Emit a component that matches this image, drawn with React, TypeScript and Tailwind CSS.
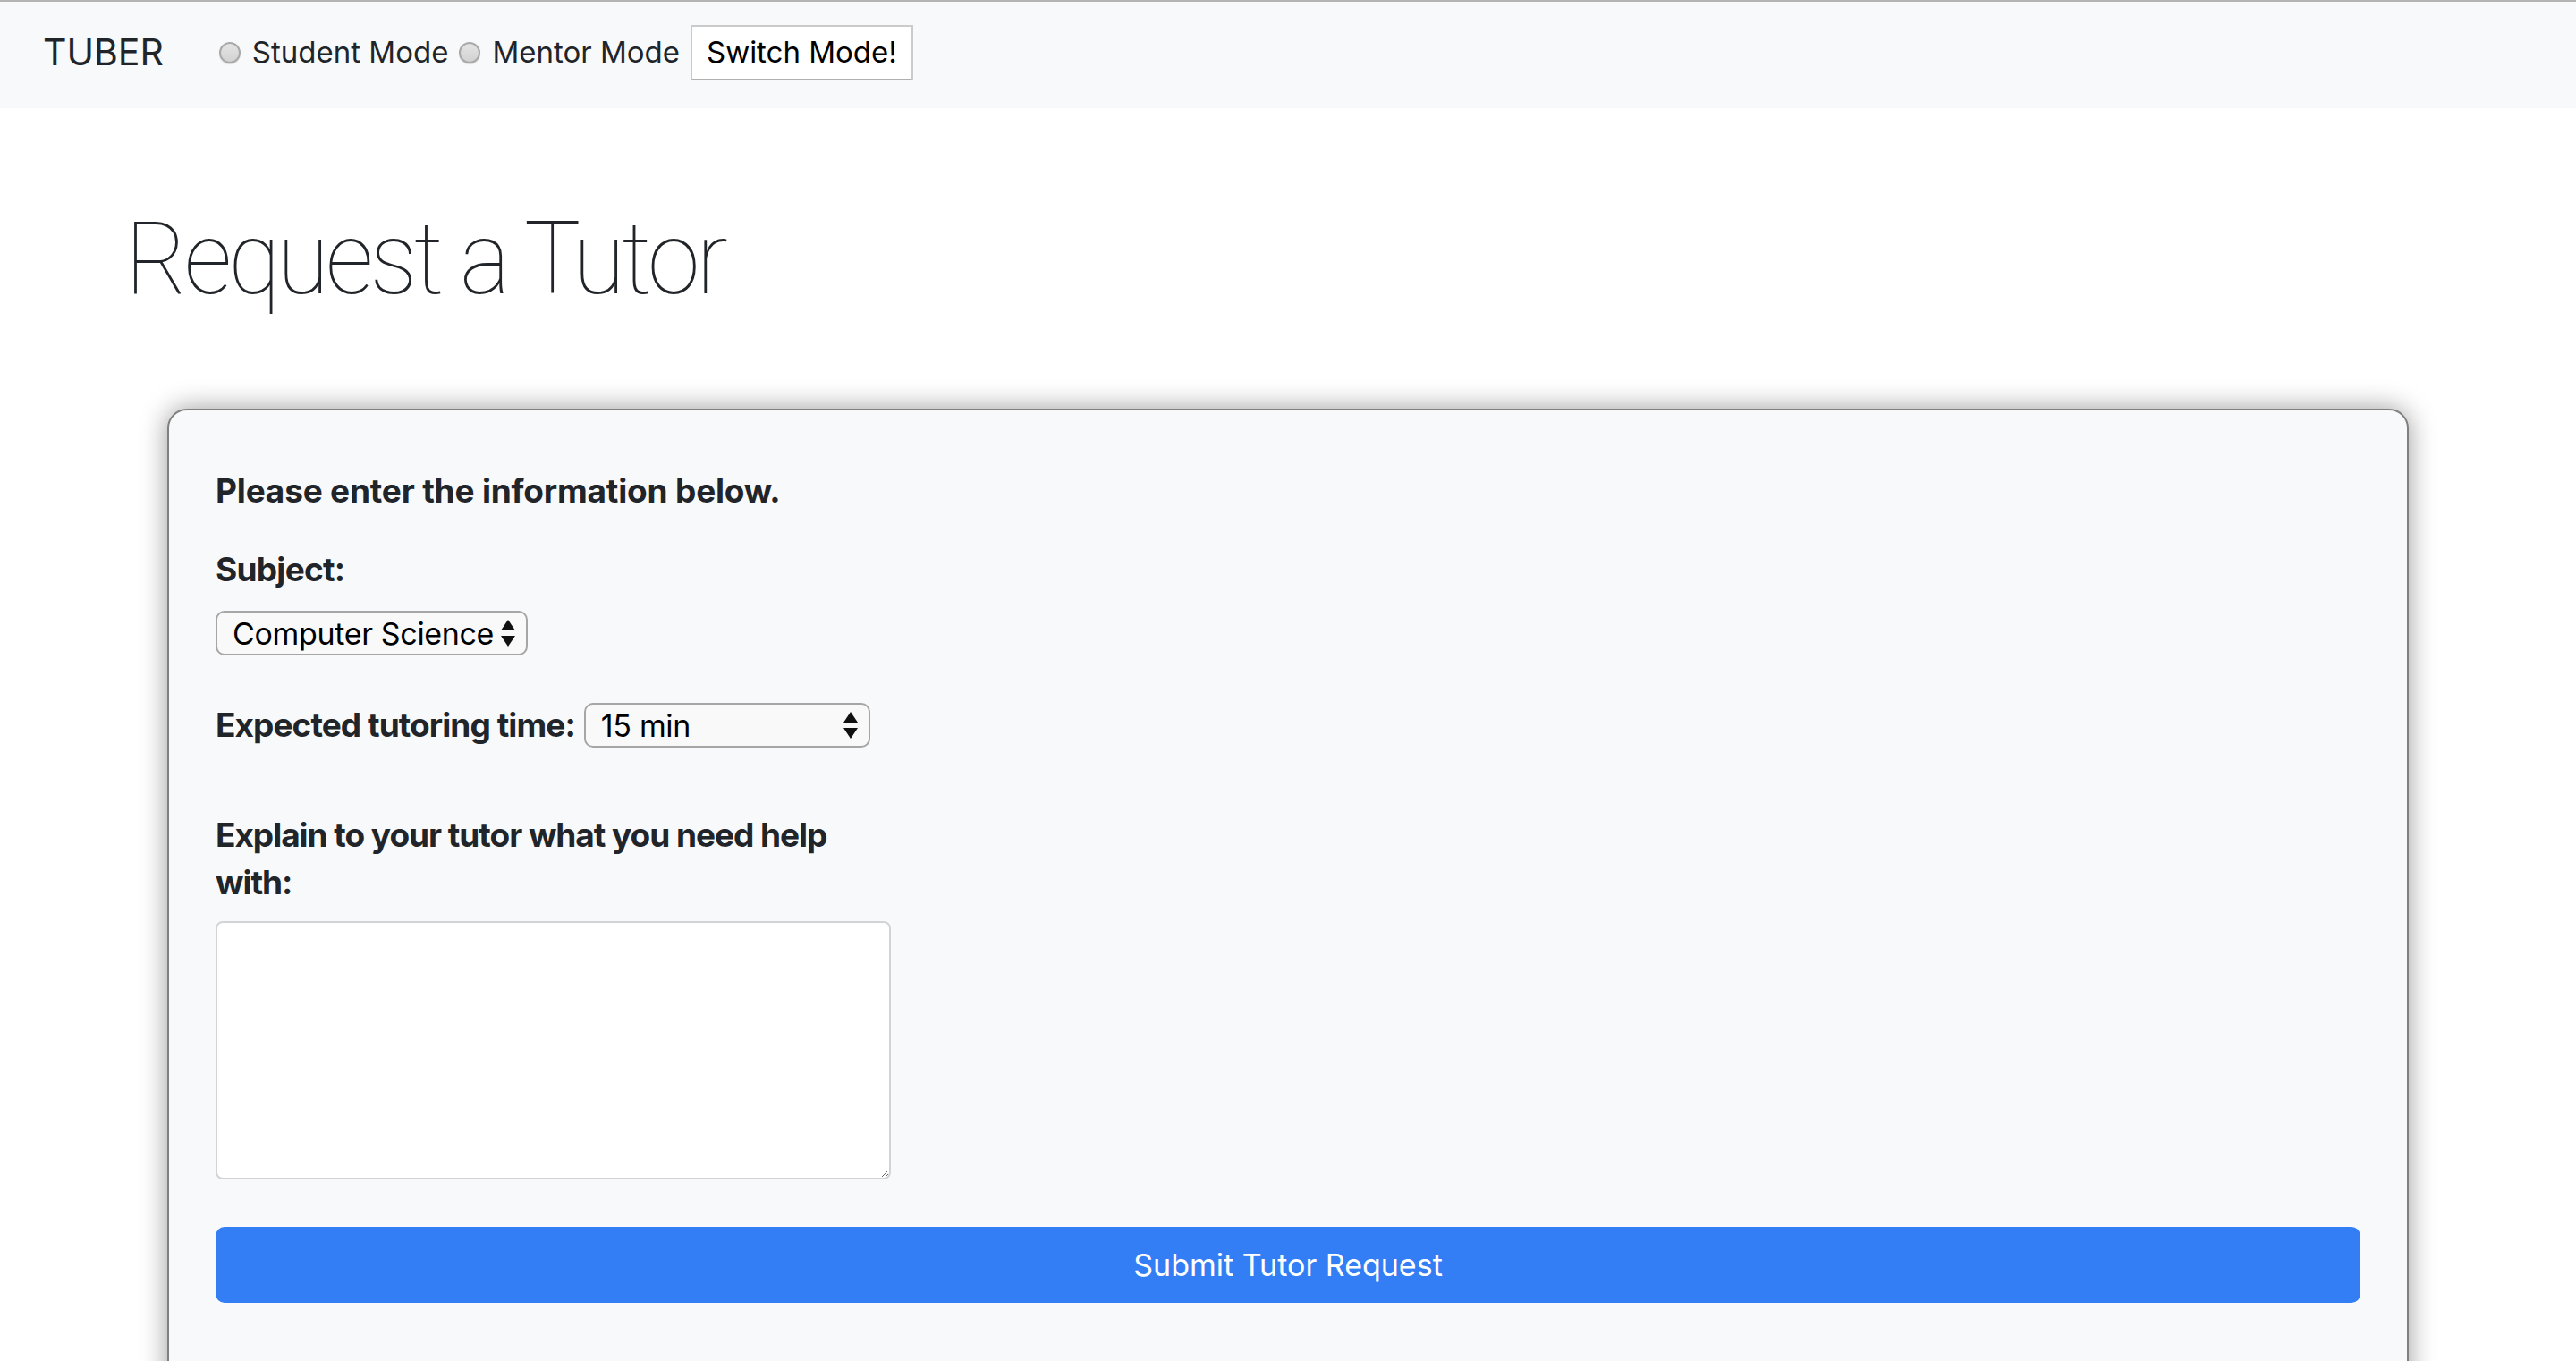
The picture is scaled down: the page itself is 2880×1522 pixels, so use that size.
import React from "react";

function Radio() {
  return (
    <span className="inline-block w-[24px] h-[24px] rounded-full border-2 border-[#a9a9a9] bg-gradient-to-b from-[#e4e4e4] to-[#d2d2d2] shadow-[0_1px_1px_rgba(0,0,0,0.15)]" />
  );
}

function Arrows() {
  return (
    <svg width="16" height="30" viewBox="0 0 16 30" className="shrink-0">
      <path d="M8 0 L16 12 L0 12 Z" fill="#111" />
      <path d="M0 18 L16 18 L8 30 Z" fill="#111" />
    </svg>
  );
}

function FakeSelect({ value, width }: { value: string; width: string }) {
  return (
    <div
      className={`${width} h-[50px] flex items-center justify-between pl-[17px] pr-[12px] border-2 border-[#a6a6a6] rounded-[10px] bg-[#f9f9f9] text-[34px] tracking-[-0.01em] text-black`}
    >
      <span>{value}</span>
      <Arrows />
    </div>
  );
}

export default function App() {
  return (
    <div className="h-screen overflow-hidden bg-white text-[#212529] font-['Inter',sans-serif]">
      {/* Navbar */}
      <nav className="h-[121px] border-t-2 border-[#b4b4b4] bg-[#f8f9fa] flex items-center pl-[48px] pb-[6px]">
        <span className="text-[41px] mr-[62px]">TUBER</span>
        <label className="flex items-center gap-[13px] text-[33px]">
          <Radio />
          <span>Student Mode</span>
        </label>
        <label className="flex items-center gap-[13px] text-[33px] ml-[12px]">
          <Radio />
          <span>Mentor Mode</span>
        </label>
        <button className="ml-[12px] h-[62px] px-[16px] bg-white border-2 border-[#cbcbcb] border-b-[#b0b0b0] text-[33px] text-black">
          Switch Mode!
        </button>
      </nav>

      {/* Heading */}
      <h1 className="ml-[140px] mt-[101px] w-fit origin-left scale-x-[0.93] text-[114px] leading-[134px] font-['Roboto',sans-serif] font-thin tracking-[-0.035em]">
        Request a Tutor
      </h1>

      {/* Card */}
      <div className="mx-[187px] mt-[101px] border-2 border-[#808080] rounded-[22px] bg-[#f8f9fa] shadow-[0_0_30px_rgba(0,0,0,0.4)] pt-[66px] px-[52px] pb-[120px]">
        <div className="text-[37px] leading-[48px] font-bold tracking-[-0.005em]">Please enter the information below.</div>

        <div className="mt-[40px] text-[37px] leading-[48px] font-bold tracking-[-0.02em]">Subject:</div>
        <div className="mt-[22px]">
          <FakeSelect value="Computer Science" width="w-[349px]" />
        </div>

        <div className="mt-[53px] flex items-center gap-[10px]">
          <span className="text-[37px] leading-[48px] font-bold tracking-[-0.025em]">Expected tutoring time:</span>
          <FakeSelect value="15 min" width="w-[320px]" />
        </div>

        <div className="mt-[71px] w-[755px]">
          <div className="text-[37px] leading-[53px] font-bold tracking-[-0.028em]">
            Explain to your tutor what you need help with:
          </div>
          <textarea className="mt-[17px] block w-[755px] h-[289px] bg-white border-2 border-[#d1d3d6] rounded-[8px] resize" />
        </div>

        <button className="mt-[53px] w-full h-[85px] rounded-[10px] bg-[#337ef5] text-white text-[34px]">
          Submit Tutor Request
        </button>
      </div>
    </div>
  );
}
